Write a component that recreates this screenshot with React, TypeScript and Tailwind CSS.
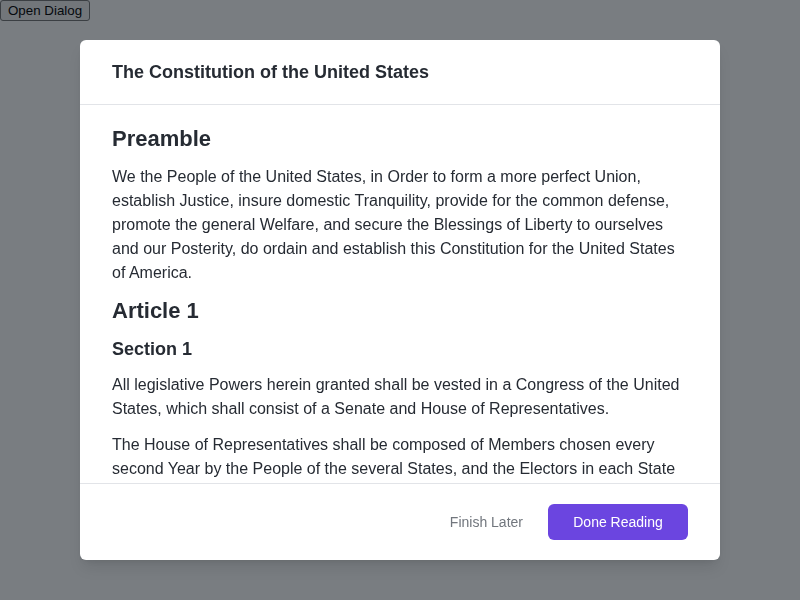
const paragraphs = {
  preamble:
    'We the People of the United States, in Order to form a more perfect Union, establish Justice, insure domestic Tranquility, provide for the common defense, promote the general Welfare, and secure the Blessings of Liberty to ourselves and our Posterity, do ordain and establish this Constitution for the United States of America.',
  s1: 'All legislative Powers herein granted shall be vested in a Congress of the United States, which shall consist of a Senate and House of Representatives.',
  s2a:
    'The House of Representatives shall be composed of Members chosen every second Year by the People of the several States, and the Electors in each State shall have the Qualifications requisite for Electors of the most numerous Branch of the State Legislature.',
  s2b:
    'No Person shall be a Representative who shall not have attained to the Age of twenty five Years, and been seven Years a Citizen of the United States, and who shall not, when elected, be an Inhabitant of that State in which he shall be chosen.',
};

const App = () => {
  return (
    <div className="relative h-[600px] w-[800px] bg-white font-['Liberation_Sans',Arial,sans-serif]">
      {/* Trigger behind the overlay */}
      <button className="block rounded-[3px] border border-[#767676] bg-[#efefef] px-[7px] text-[13.33px] leading-[19px] text-black">
        Open Dialog
      </button>

      {/* Overlay + dialog */}
      <div className="fixed inset-0 flex items-start justify-center bg-[#0b131a]/[0.55] pt-10">
        <div className="flex h-[520px] w-[640px] flex-col overflow-hidden rounded-md bg-white text-[#262b33] shadow-lg">
          <div className="border-b border-[#e2e4e8] px-8 py-5">
            <h1 className="text-lg leading-6 font-bold">The Constitution of the United States</h1>
          </div>

          <div className="flex-1 overflow-hidden px-8 pt-5">
            <h2 className="text-[22px] leading-[28px] font-bold">Preamble</h2>
            <p className="mt-3 text-base leading-6">{paragraphs.preamble}</p>
            <h2 className="mt-3 text-[22px] leading-[28px] font-bold">Article 1</h2>
            <h3 className="mt-3 text-lg leading-6 font-bold">Section 1</h3>
            <p className="mt-3 text-base leading-6">{paragraphs.s1}</p>
            <p className="mt-3 text-base leading-6">{paragraphs.s2a}</p>
            <p className="mt-3 text-base leading-6">{paragraphs.s2b}</p>
          </div>

          <div className="flex items-center justify-end gap-[9px] border-t border-[#e2e4e8] px-8 py-5">
            <button className="h-9 px-4 text-sm text-[#71767d]">Finish Later</button>
            <button className="h-9 w-[140px] rounded-md bg-[#6b45e0] text-sm text-white">Done Reading</button>
          </div>
        </div>
      </div>
    </div>
  );
};

export default App;
